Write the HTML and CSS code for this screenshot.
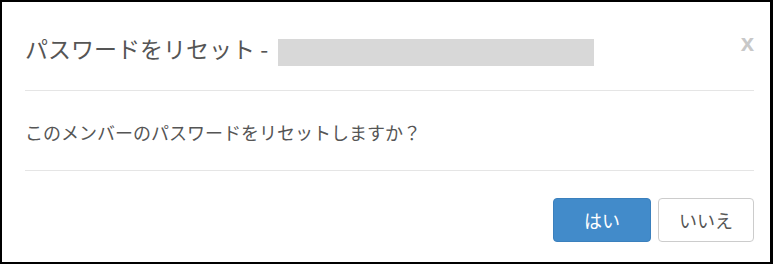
FILE: index.html
```html
<!DOCTYPE html>
<html lang="ja">
<head>
<meta charset="utf-8">
<title>パスワードをリセット</title>
<link rel="stylesheet" href="styles.css">
</head>
<body>
<div class="frame">
  <div class="modal-header">
    <div class="modal-title">
      <span class="title-text">パスワードをリセット -</span>
      <span class="redacted"></span>
    </div>
    <span class="close">x</span>
  </div>
  <div class="modal-body">
    <p class="message">このメンバーのパスワードをリセットしますか？</p>
  </div>
  <div class="modal-footer">
    <button class="btn btn-primary">はい</button>
    <button class="btn btn-default">いいえ</button>
  </div>
</div>
</body>
</html>
```

FILE: styles.css
```css
html, body {
  margin: 0;
  padding: 0;
  background: #ffffff;
}

.frame {
  box-sizing: border-box;
  width: 773px;
  height: 264px;
  border-style: solid;
  border-color: #000000;
  border-width: 2px 3px 2px 2px;
  background: #ffffff;
  font-family: "Noto Sans CJK JP", "Noto Sans", sans-serif;
  color: #555555;
  display: flex;
  flex-direction: column;
}

.modal-header {
  margin: 0 16px 0 23px;
  padding: 31px 0 27px 0;
  border-bottom: 1px solid #e5e5e5;
  display: flex;
  justify-content: space-between;
  align-items: flex-start;
}

.modal-title {
  display: flex;
  align-items: flex-start;
  height: 30px;
}

.title-text {
  font-size: 23px;
  line-height: 30px;
  color: #555555;
  white-space: pre;
}

.redacted {
  display: block;
  width: 316px;
  height: 27px;
  margin-top: 6px;
  margin-left: 10px;
  background: #d8d8d8;
}

.close {
  font-family: "Liberation Sans", Arial, sans-serif;
  font-weight: bold;
  font-size: 24px;
  line-height: 24px;
  color: #c8c8c8;
  margin-top: -2px;
  margin-right: 0;
}

.modal-body {
  margin: 0 16px 0 23px;
  padding: 28px 0 25px 0;
  border-bottom: 1px solid #e5e5e5;
}

.message {
  margin: 0;
  font-size: 18px;
  line-height: 26px;
  color: #555555;
}

.modal-footer {
  margin: 0 16px 0 23px;
  padding-top: 27px;
  display: flex;
  justify-content: flex-end;
  gap: 7px;
}

.btn {
  box-sizing: border-box;
  height: 44px;
  font-family: "Noto Sans CJK JP", "Noto Sans", sans-serif;
  font-size: 18px;
  line-height: 20px;
  border-radius: 4px;
  border: 1px solid transparent;
  padding: 0;
  text-align: center;
}

.btn-primary {
  width: 98px;
  background: #428bca;
  border-color: #3b80bd;
  color: #ffffff;
}

.btn-default {
  width: 96px;
  background: #ffffff;
  border-color: #cccccc;
  color: #555555;
}
```
